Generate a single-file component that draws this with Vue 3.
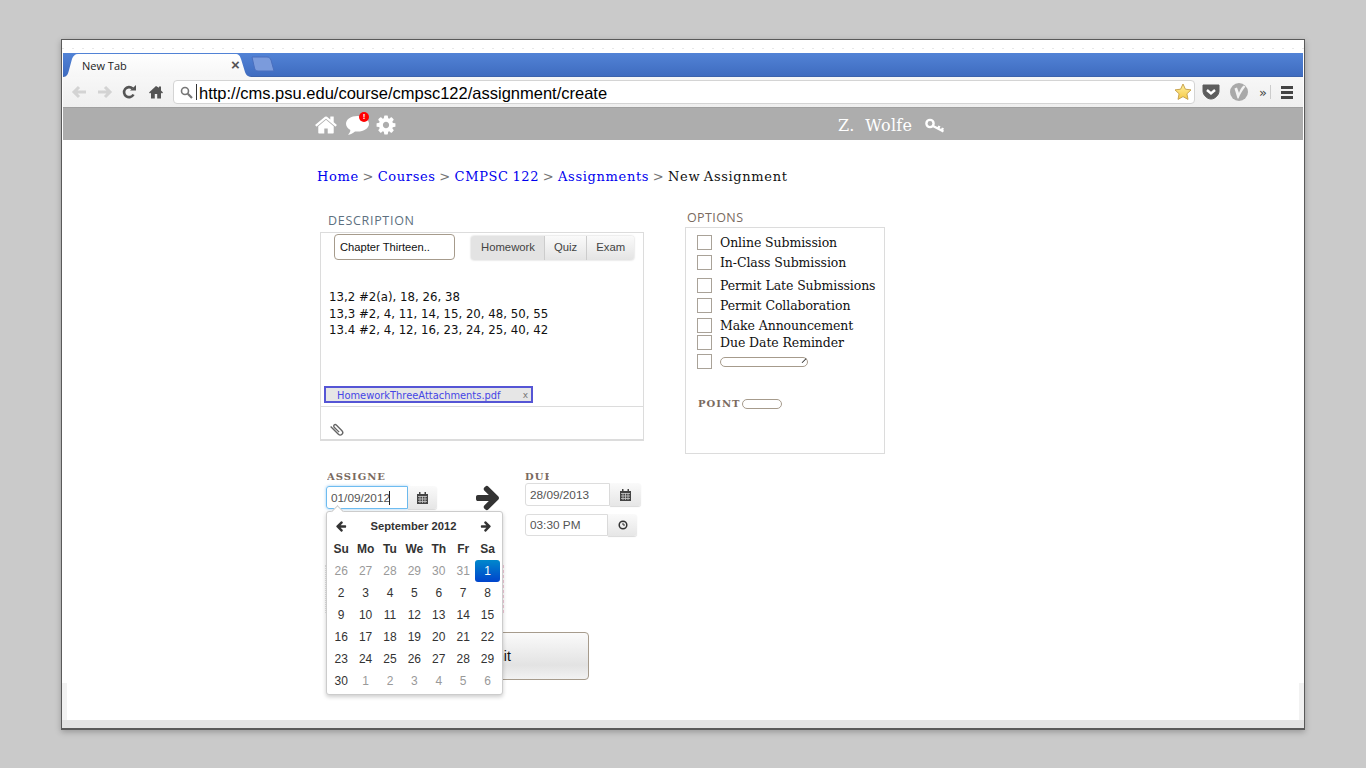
<script setup>
const options = [
  { label: 'Online Submission', cls: 'o1' },
  { label: 'In-Class Submission', cls: 'o2' },
  { label: 'Permit Late Submissions', cls: 'o3' },
  { label: 'Permit Collaboration', cls: 'o2' },
  { label: 'Make Announcement', cls: 'o2' },
  { label: 'Due Date Reminder', cls: 'o4' },
]
const days = ['Su', 'Mo', 'Tu', 'We', 'Th', 'Fr', 'Sa']
const weeks = [
  [26, 27, 28, 29, 30, 31, 1],
  [2, 3, 4, 5, 6, 7, 8],
  [9, 10, 11, 12, 13, 14, 15],
  [16, 17, 18, 19, 20, 21, 22],
  [23, 24, 25, 26, 27, 28, 29],
  [30, 1, 2, 3, 4, 5, 6],
]
function dayClass(w, d) {
  if (w === 0 && d === 6) return 'active'
  if (w === 0 || (w === 5 && d > 0)) return 'old'
  return ''
}
const arrow = 'M1600 960q0 54-37 91l-651 651q-39 37-91 37-51 0-90-37l-75-75q-38-38-38-91t38-91l293-293h-704q-52 0-84.500-37.500t-32.500-90.500v-128q0-53 32.500-90.500t84.500-37.500h704l-293-294q-38-36-38-90t38-90l75-75q38-38 90-38 53 0 91 38l651 651q37 35 37 90z'
const homePath = 'M1472 992v480q0 26-19 45t-45 19h-384v-384h-256v384h-384q-26 0-45-19t-19-45v-480q0-1 .5-3t.5-3l575-474 575 474q1 2 1 6zm223-69l-62 74q-8 9-21 11h-3q-13 0-21-7l-692-577-692 577q-12 8-24 7-13-2-21-11l-62-74q-8-10-7-23.500t11-21.500l719-599q32-26 76-26t76 26l244 204v-195q0-14 9-23t23-9h192q14 0 23 9t9 23v408l219 182q10 8 11 21.500t-7 23.500z'
const cogPath = 'M1152 896q0-106-75-181t-181-75-181 75-75 181 75 181 181 75 181-75 75-181zm512-109v222q0 12-8 23t-20 13l-185 28q-19 54-39 91 35 50 107 138 10 12 10 25t-9 23q-27 37-99 108t-94 71q-12 0-26-9l-138-108q-44 23-91 38-16 136-29 186-7 28-36 28h-222q-14 0-24.500-8.500t-11.500-21.500l-28-184q-49-16-90-37l-141 107q-10 9-25 9-14 0-25-11-126-114-165-168-7-10-7-23 0-12 8-23 15-21 51-66.500t54-70.500q-27-50-41-99l-183-27q-13-2-21-12.500t-8-23.500v-222q0-12 8-23t19-13l186-28q14-46 39-92-40-57-107-138-10-12-10-24 0-10 9-23 26-36 98.500-107.500t94.500-71.500q13 0 26 10l138 107q44-23 91-38 16-136 29-186 7-28 36-28h222q14 0 24.500 8.500t11.500 21.500l28 184q49 16 90 37l142-107q9-9 24-9 13 0 25 10 129 119 165 170 7 8 7 22 0 12-8 23-15 21-51 66.500t-54 70.500q26 50 41 98l183 28q13 2 21 12.500t8 23.500z'
</script>

<template>
  <div class="window">
    <div class="strip"></div>

    <div class="tabbar">
      <div class="tab">
        <svg class="tab-bg" width="190" height="24" viewBox="0 0 190 24">
          <defs>
            <linearGradient id="tabfill" x1="0" y1="0" x2="0" y2="1">
              <stop offset="0" stop-color="#ffffff" />
              <stop offset="1" stop-color="#f6f6f6" />
            </linearGradient>
          </defs>
          <path d="M0 24C4 24 5 21 6 17L9 6C10 3 12 1 15 1H172C176 1 177 3 178 6L182 19C183 22 185 24 190 24Z" fill="url(#tabfill)" />
        </svg>
        <span class="tab-title">New Tab</span>
        <span class="tab-x">×</span>
      </div>
      <svg class="newtab" width="26" height="16" viewBox="0 0 26 16">
        <path d="M1 1H16C18 1 19 2 20 4L23 15H7C5 15 4 14 3.500 12Z" fill="#7b9bdc" stroke="#4a6fbe" />
      </svg>
    </div>

    <div class="toolbar">
      <svg class="tb-icon back" width="16" height="14" viewBox="0 0 16 14">
        <path d="M15 7H3M8 2L3 7l5 5" fill="none" stroke="#d3d3d3" stroke-width="3" />
      </svg>
      <svg class="tb-icon fwd" width="16" height="14" viewBox="0 0 16 14">
        <path d="M1 7h12M8 2l5 5-5 5" fill="none" stroke="#d3d3d3" stroke-width="3" />
      </svg>
      <svg class="tb-icon reload" width="14" height="14" viewBox="0 0 14 14">
        <path d="M11.500 9.500A5 5 0 1 1 10.500 3.500" fill="none" stroke="#555" stroke-width="2.600" />
        <path d="M8 5.500h6V0Z" fill="#555" />
      </svg>
      <svg class="tb-icon homeb" width="14" height="14" viewBox="0 0 14 14">
        <path d="M7 1L0 7.500l1 1 1-.8V13.500h3.800V9h2.400v4.500H12V7.700l1 .8 1-1-2-1.900V1.500H10v1.300L7 1Z" fill="#555" />
      </svg>
      <div class="omnibox">
        <svg class="search" width="13" height="13" viewBox="0 0 13 13">
          <circle cx="5" cy="5" r="3.500" fill="none" stroke="#777" stroke-width="1.600" />
          <path d="M7.800 7.800L12 12" stroke="#777" stroke-width="2.200" />
        </svg>
        <span class="caret"></span>
        <span class="url">http://cms.psu.edu/course/cmpsc122/assignment/create</span>
        <svg class="star" width="18" height="18" viewBox="0 0 18 18">
          <defs>
            <linearGradient id="starfill" x1="0" y1="0" x2="0" y2="1">
              <stop offset="0" stop-color="#fff0a0" />
              <stop offset="1" stop-color="#f6c945" />
            </linearGradient>
          </defs>
          <path d="M9 1l2.400 5.200 5.600.7-4.100 3.900 1.100 5.600L9 13.600l-5 2.800 1.100-5.600L1 6.900l5.600-.7Z" fill="url(#starfill)" stroke="#c9a550" stroke-width="1" />
        </svg>
      </div>
      <svg class="tb-icon pocket" width="18" height="16" viewBox="0 0 18 16">
        <path d="M1 1h16v6c0 4-4 8-8 8s-8-4-8-8Z" fill="#5c5c5c" stroke="#5c5c5c" stroke-linejoin="round" />
        <path d="M5 6l4 3.500L13 6" fill="none" stroke="#fff" stroke-width="2.400" />
      </svg>
      <svg class="tb-icon vee" width="18" height="18" viewBox="0 0 18 18">
        <circle cx="9" cy="9" r="9" fill="#a9a9a9" />
        <path d="M4.500 5.500L7 4.500 9 10C10 7 11 5 13.500 2.500L15.500 3.500C12 8 10 11.500 8.500 15.500H7.500Z" fill="#f2f2f2" />
      </svg>
      <span class="chev">»</span>
      <span class="sep"></span>
      <div class="burger"><i></i><i></i><i></i></div>
    </div>

    <nav class="navbar">
      <svg class="nav-home" width="24" height="24" viewBox="0 0 1792 1792">
        <path :d="homePath" fill="#fff" />
      </svg>
      <div class="nav-msg">
        <svg width="23" height="19" viewBox="0 0 23 19">
          <path d="M11.500 0C18 0 23 3.300 23 7.800s-5 7.800-11.500 7.800c-1 0-1.700 0-2.500-.2C6.800 17.300 4.500 18.500 2 18.800c1.200-1.200 2.200-2.800 2.400-4.800C1.700 12.500 0 10.300 0 7.800 0 3.300 5 0 11.500 0Z" fill="#fff" />
        </svg>
        <span class="badge">!</span>
      </div>
      <svg class="nav-cog" width="22" height="22" viewBox="0 0 1792 1792">
        <path :d="cogPath" fill="#fff" />
      </svg>
      <span class="nav-user">Z.&nbsp; Wolfe</span>
      <svg class="nav-key" width="20" height="18" viewBox="0 0 20 18">
        <circle cx="5" cy="7.500" r="3.600" fill="none" stroke="#fff" stroke-width="2.400" />
        <path d="M8 10l10.500 5.500M13 12.500l1.500-2.500M16.500 14.500l1.500-2.500" fill="none" stroke="#fff" stroke-width="2.400" />
      </svg>
    </nav>

    <main class="page">
      <div class="crumbs">
        <a>Home</a> &gt; <a>Courses</a> &gt; <a>CMPSC 122</a> &gt; <a>Assignments</a> &gt; <b>New Assignment</b>
      </div>

      <div class="cols">
        <div class="left">
          <div class="sec-label desc-label">DESCRIPTION</div>
          <section class="desc">
            <div class="desc-top">
              <div class="title-input">Chapter Thirteen..</div>
              <div class="segs">
                <span class="seg on">Homework</span>
                <span class="seg">Quiz</span>
                <span class="seg">Exam</span>
              </div>
            </div>
            <div class="body-text">
              <div>13,2 #2(a), 18, 26, 38</div>
              <div>13,3 #2, 4, 11, 14, 15, 20, 48, 50, 55</div>
              <div>13.4 #2, 4, 12, 16, 23, 24, 25, 40, 42</div>
            </div>
            <div class="chip">
              <span>HomeworkThreeAttachments.pdf</span>
              <em>x</em>
            </div>
            <div class="desc-foot">
              <svg width="14" height="14" viewBox="0 0 14 14">
                <g transform="rotate(45 7 7)">
                  <path d="M0 9H11a2.500 2.500 0 0 0 0-5H3a1.500 1.500 0 0 0 0 3H10" fill="none" stroke="#666" stroke-width="1.400" />
                </g>
              </svg>
            </div>
          </section>

          <div class="dates">
            <div class="date-start">
              <div class="mini-label start-label">ASSIGNED</div>
              <div class="field focus">
                <div class="fld-input">01/09/2012<span class="text-caret"></span></div>
                <div class="addon">
                  <svg width="11" height="12" viewBox="0 0 11 12">
                    <path d="M0 2h11v10H0Z" fill="#444" />
                    <path d="M2 0h1.500v3H2ZM7.500 0H9v3H7.500Z" fill="#444" />
                    <path d="M1 4.500h9M1 7h9M1 9.500h9M3 4v7M5.500 4v7M8 4v7" stroke="#c9c9c9" stroke-width=".8" />
                  </svg>
                </div>
              </div>
              <div class="picker">
                <div class="pk-head">
                  <svg class="pk-arrow" width="12" height="12" viewBox="0 0 1792 1792" style="transform: scaleX(-1)"><path :d="arrow" fill="#333" /></svg>
                  <span>September 2012</span>
                  <svg class="pk-arrow" width="12" height="12" viewBox="0 0 1792 1792"><path :d="arrow" fill="#333" /></svg>
                </div>
                <div class="pk-grid">
                  <span v-for="d in days" :key="d" class="pk-dow">{{ d }}</span>
                  <template v-for="(w, wi) in weeks" :key="wi">
                    <span v-for="(n, di) in w" :key="di" class="pk-day" :class="dayClass(wi, di)">{{ n }}</span>
                  </template>
                </div>
              </div>
            </div>
            <svg class="big-arrow" width="28" height="28" viewBox="0 0 1792 1792"><path :d="arrow" fill="#333" /></svg>
            <div class="date-end">
              <div class="mini-label end-label">DUE</div>
              <div class="field due">
                <div class="fld-input">28/09/2013</div>
                <div class="addon">
                  <svg width="11" height="12" viewBox="0 0 11 12">
                    <path d="M0 2h11v10H0Z" fill="#444" />
                    <path d="M2 0h1.500v3H2ZM7.500 0H9v3H7.500Z" fill="#444" />
                    <path d="M1 4.500h9M1 7h9M1 9.500h9M3 4v7M5.500 4v7M8 4v7" stroke="#c9c9c9" stroke-width=".8" />
                  </svg>
                </div>
              </div>
              <div class="field time">
                <div class="fld-input">03:30 PM</div>
                <div class="addon">
                  <svg width="10" height="10" viewBox="0 0 10 10">
                    <circle cx="5" cy="5" r="3.800" fill="none" stroke="#333" stroke-width="1.500" />
                    <path d="M5 2.800V5h2" fill="none" stroke="#333" />
                  </svg>
                </div>
              </div>
            </div>
          </div>

          <button class="submit">Submit</button>
        </div>

        <div class="right">
          <div class="sec-label opt-label">OPTIONS</div>
          <section class="opts">
            <label v-for="o in options" :key="o.label" class="opt" :class="o.cls">
              <span class="box"></span>{{ o.label }}
            </label>
            <div class="opt o5">
              <span class="box"></span>
              <span class="mini-input wide"><i></i></span>
            </div>
            <div class="points">
              <span class="mini-label">POINT</span>
              <span class="mini-input short"></span>
            </div>
          </section>
        </div>
      </div>

      <div class="frame-l"></div>
      <div class="frame-r"></div>
      <div class="frame-b"></div>
    </main>
  </div>
</template>

<style scoped>
.window {
  position: absolute;
  left: 61px;
  top: 39px;
  width: 1244px;
  height: 691px;
  box-sizing: border-box;
  border: 1px solid #5a5a5a;
  border-bottom-width: 2px;
  background: #fff;
  display: flex;
  flex-direction: column;
  overflow: hidden;
  box-shadow: 0 2px 6px rgba(0, 0, 0, .25);
  font-family: "DejaVu Sans", sans-serif;
}
.strip {
  height: 13px;
  flex: none;
  box-sizing: border-box;
  background: repeating-linear-gradient(90deg, #e8e8e8 0 2px, #fff 2px 10px) 0 8px / 100% 1px no-repeat;
}
.tabbar {
  height: 24px;
  flex: none;
  display: flex;
  align-items: flex-end;
  background: linear-gradient(#5283d6, #3f6cc0);
  border-bottom: 1px solid #3c63ac;
  margin: 0 1px;
  box-sizing: border-box;
}
.tab {
  position: relative;
  width: 190px;
  height: 23px;
  flex: none;
}
.tab-bg {
  position: absolute;
  left: 0;
  bottom: -1px;
}
.tab-title {
  position: absolute;
  left: 19px;
  top: 5px;
  font: 11px "Open Sans", sans-serif;
  color: #222;
}
.tab-x {
  position: absolute;
  left: 168px;
  top: 3px;
  font: bold 15px "Liberation Sans", sans-serif;
  color: #555;
}
.newtab {
  margin: 0 0 4px -2px;
}
.toolbar {
  height: 30px;
  margin: 0 1px;
  display: flex;
  align-items: center;
  background: linear-gradient(#f7f7f7, #efefef);
  flex: none;
}
.tb-icon {
  flex: none;
}
.back {
  margin-left: 8px;
}
.fwd {
  margin-left: 10px;
}
.reload {
  margin-left: 9px;
}
.homeb {
  margin-left: 13px;
}
.omnibox {
  width: 1022px;
  height: 24px;
  margin-left: 10px;
  box-sizing: border-box;
  border: 1px solid #d4d4d4;
  border-radius: 4px;
  background: #fff;
  display: flex;
  align-items: center;
  flex: none;
}
.search {
  margin-left: 6px;
  flex: none;
}
.caret {
  width: 1px;
  height: 16px;
  background: #333;
  margin-left: 3px;
}
.url {
  font: 16.500px "Liberation Sans", sans-serif;
  color: #000;
  margin-left: 2px;
  padding-top: 2px;
  flex: 1;
}
.star {
  margin-right: 2px;
}
.pocket {
  margin-left: 7px;
}
.vee {
  margin-left: 10px;
}
.chev {
  margin-left: 11px;
  font: 13px "DejaVu Sans", sans-serif;
  color: #444;
}
.sep {
  width: 1px;
  height: 14px;
  background: #ccc;
  margin-left: 3px;
}
.burger {
  margin-left: 10px;
  width: 12px;
  display: flex;
  flex-direction: column;
  gap: 2px;
}
.burger i {
  display: block;
  height: 3px;
  background: #444;
}
.navbar {
  height: 33px;
  flex: none;
  margin: 0 1px;
  background: #adadad;
  border-top: 1px solid #a0a0a0;
  box-sizing: border-box;
  display: flex;
  align-items: center;
  padding: 2px 0 0 251px;
  color: #fff;
}
.nav-msg {
  position: relative;
  margin-left: 8px;
  height: 19px;
}
.badge {
  position: absolute;
  left: 13px;
  top: -4px;
  width: 10px;
  height: 10px;
  border-radius: 50%;
  background: #f00;
  color: #fff;
  font: bold 8px/10px "Liberation Sans", sans-serif;
  text-align: center;
}
.nav-cog {
  margin-left: 6px;
}
.nav-user {
  margin-left: 441px;
  font: 16px "DejaVu Serif", serif;
  letter-spacing: .3px;
}
.nav-key {
  margin-left: 13px;
}
.page {
  position: relative;
  flex: 1;
  padding: 28px 0 0 258px;
  font-family: "DejaVu Serif", serif;
}
.crumbs {
  margin-left: -3px;
  font-size: 13px;
  line-height: 18px;
  letter-spacing: .65px;
  word-spacing: -1.100px;
  color: #777;
}
.crumbs a {
  color: #00e;
}
.crumbs b {
  font-weight: normal;
  color: #111;
}
.cols {
  display: flex;
  gap: 41px;
  align-items: flex-start;
}
.left {
  width: 324px;
}
.sec-label {
  font: 12.500px/14px "Open Sans", sans-serif;
  letter-spacing: .7px;
}
.desc-label {
  margin: 28px 0 4px 8px;
  color: #5d7080;
}
.opt-label {
  margin: 25px 0 2px 2px;
  color: #7a6a60;
  letter-spacing: .4px;
}
.desc {
  box-sizing: border-box;
  height: 209px;
  border: 1px solid #dcdcdc;
  border-bottom-width: 2px;
  font-family: "DejaVu Sans", sans-serif;
}
.desc-top {
  display: flex;
  padding: 1px 0 0 13px;
  height: 28px;
}
.title-input {
  width: 121px;
  height: 26px;
  box-sizing: border-box;
  border: 1.500px solid #a69b8c;
  border-radius: 4px;
  font: 11.200px/24px "Liberation Sans", sans-serif;
  color: #111;
  padding-left: 5px;
}
.segs {
  display: flex;
  margin: 2px 0 0 16px;
  height: 24px;
  font: 11.300px/22px "Liberation Sans", sans-serif;
  color: #444;
  box-shadow: 0 0 2px rgba(0, 0, 0, .25);
  border-radius: 3px;
}
.seg {
  background: linear-gradient(#fafafa, #e4e4e4);
  border-right: 1px solid #ccc;
  padding: 0 9px;
}
.seg:last-child {
  border-right: 0;
  border-radius: 0 3px 3px 0;
}
.seg.on {
  background: #e3e3e3;
  padding: 0 9px 0 10px;
  border-radius: 3px 0 0 3px;
}
.body-text {
  margin: 27px 0 0 8px;
  height: 97px;
  font-size: 11.750px;
  line-height: 16.500px;
  color: #111;
}
.chip {
  width: 209px;
  height: 17px;
  box-sizing: border-box;
  margin-left: 3px;
  border: 2px solid #5555d5;
  background: #e6e6e6;
  display: flex;
  justify-content: space-between;
  align-items: center;
  padding: 1px 3px 0 11px;
  font-size: 9.900px;
  color: #4545e5;
}
.chip em {
  font: 9px "DejaVu Sans", sans-serif;
  color: #777;
}
.desc-foot {
  box-sizing: border-box;
  margin-top: 3px;
  height: 33px;
  border-top: 1px solid #dcdcdc;
  padding: 15px 0 0 9px;
}
.dates {
  display: flex;
  margin-top: 29px;
  padding-left: 6px;
  align-items: flex-start;
}
.date-start {
  position: relative;
  width: 111px;
}
.mini-label {
  display: block;
  font: bold 10px/14px "DejaVu Serif", serif;
  letter-spacing: 1px;
  color: #7a6a60;
  overflow: hidden;
  white-space: nowrap;
}
.start-label {
  width: 58px;
  margin-left: 1px;
  height: 16px;
}
.end-label {
  width: 24px;
  height: 16px;
}
.field {
  display: flex;
  box-sizing: border-box;
  font: 11.800px "Liberation Sans", sans-serif;
  color: #555;
}
.fld-input {
  box-sizing: border-box;
  height: 100%;
  border: 1px solid #ddd;
  border-radius: 3px 0 0 3px;
  display: flex;
  align-items: center;
  padding-left: 4px;
}
.addon {
  height: 100%;
  display: flex;
  align-items: center;
  justify-content: center;
  background: linear-gradient(#fafafa, #e6e6e6);
  border-radius: 0 3px 3px 0;
  box-shadow: 0 1px 1px rgba(0, 0, 0, .15);
}
.focus {
  height: 23px;
  margin-top: 0;
  width: 111px;
}
.focus .fld-input {
  width: 82px;
  border: 1px solid #6ebcf0;
  box-shadow: 0 0 3px rgba(82, 168, 236, .6);
}
.focus .addon {
  width: 29px;
}
.text-caret {
  width: 1px;
  height: 14px;
  background: #222;
  margin-left: -1px;
}
.due {
  height: 23px;
  margin-top: -3px;
  width: 116px;
}
.due .fld-input {
  width: 85px;
}
.due .addon {
  width: 31px;
}
.time {
  height: 22px;
  margin-top: 8px;
  width: 112px;
}
.time .fld-input {
  width: 83px;
}
.time .addon {
  width: 29px;
}
.big-arrow {
  flex: none;
  margin: 13px 23px 0 37px;
  width: 28px;
}
.date-end {
  width: 118px;
}
.date-start::before {
  content: "";
  position: absolute;
  left: -1px;
  top: 95px;
  width: 177px;
  height: 48px;
  border-left: 1px dotted #e0e0e0;
  border-right: 1px dashed #f0c8d8;
}
.picker {
  position: absolute;
  left: 0;
  top: 41px;
  z-index: 3;
  width: 177px;
  height: 184px;
  box-sizing: border-box;
  border: 1px solid #ccc;
  border-radius: 3px;
  background: #fff;
  box-shadow: 0 2px 4px rgba(0, 0, 0, .2);
  font: 12px "Liberation Sans", sans-serif;
  color: #333;
}
.picker::before {
  content: "";
  position: absolute;
  left: 6px;
  top: -5px;
  width: 8px;
  height: 8px;
  background: #fff;
  border-left: 1px solid #ccc;
  border-top: 1px solid #ccc;
  transform: rotate(45deg);
}
.pk-head {
  display: flex;
  justify-content: space-between;
  align-items: center;
  height: 27px;
  padding: 0 10px 0 8px;
  font-weight: bold;
  font-size: 11.200px;
}
.pk-arrow {
  flex: none;
}
.pk-grid {
  display: grid;
  grid-template-columns: repeat(7, 24.400px);
  grid-auto-rows: 22px;
  margin-left: 2px;
  margin-top: -1px;
}
.pk-grid span {
  display: flex;
  align-items: center;
  justify-content: center;
}
.pk-dow {
  font-weight: bold;
}
.pk-day.old {
  color: #999;
}
.pk-day.active {
  color: #fff;
  background: linear-gradient(#08c, #04c);
  border-radius: 3px;
}
.submit {
  display: block;
  width: 200px;
  height: 48px;
  margin: 96px 0 0 69px;
  box-sizing: border-box;
  border: 1px solid #a69b8c;
  border-radius: 4px;
  background: linear-gradient(#fafafa, #e3e3e3 70%, #f2f2f2);
  font: 14px "Liberation Sans", sans-serif;
  color: #111;
  padding: 0;
}
.right {
  width: 200px;
}
.opts {
  box-sizing: border-box;
  height: 227px;
  border: 1px solid #dcdcdc;
  padding: 7px 0 0 11px;
}
.opt {
  display: flex;
  align-items: center;
  font-size: 12.500px;
  letter-spacing: -.09px;
  line-height: 15px;
  color: #111;
  height: 15px;
  white-space: nowrap;
}
.box {
  width: 15px;
  height: 15px;
  box-sizing: border-box;
  border: 1.500px solid #a9a298;
  margin-right: 8px;
  flex: none;
}
.o2 {
  margin-top: 5px;
}
.o3 {
  margin-top: 8px;
}
.o4 {
  margin-top: 2px;
}
.o5 {
  margin-top: 4px;
}
.mini-input {
  display: block;
  box-sizing: border-box;
  height: 10px;
  border: 1px solid #a69b8c;
  border-radius: 5px;
  position: relative;
}
.wide {
  width: 88px;
}
.wide i {
  position: absolute;
  right: 2px;
  top: 0;
  width: 6px;
  height: 1px;
  background: #333;
  transform: rotate(-45deg) translateY(3px);
}
.short {
  width: 40px;
  margin-left: 1px;
}
.points {
  display: flex;
  margin: 28px 0 0 1px;
  align-items: center;
}
.frame-l,
.frame-r {
  position: absolute;
  width: 5px;
  bottom: 8px;
  height: 37px;
  background: #f2f2f2;
}
.frame-l {
  left: 0;
}
.frame-r {
  right: 0;
}
.frame-b {
  position: absolute;
  left: 0;
  right: 0;
  bottom: 0;
  height: 8px;
  background: #e3e3e3;
}
</style>

<style>
html,
body {
  margin: 0;
  background: #cacaca;
  height: 768px;
  overflow: hidden;
}
</style>
